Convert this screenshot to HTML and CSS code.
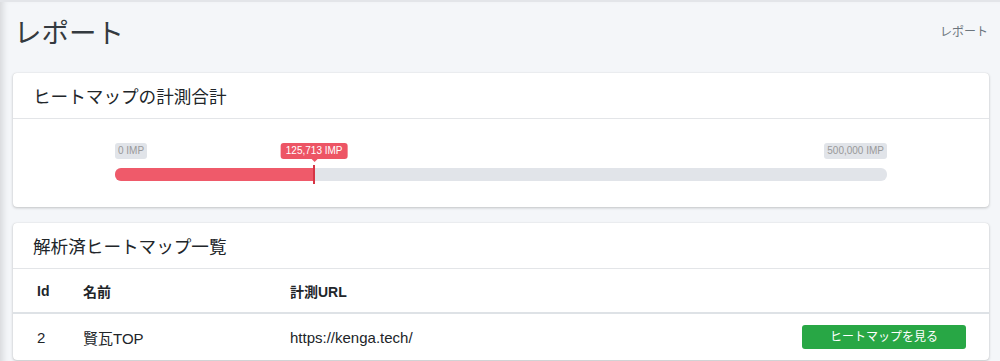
FILE: index.html
```html
<!DOCTYPE html>
<html lang="ja">
<head>
    <meta charset="UTF-8">
    <title>レポート</title>
    <link rel="stylesheet" href="styles.css">
</head>
<body>
    <div class="wrapper">
        <div class="content-header">
            <h1>レポート</h1>
            <div class="breadcrumb">レポート</div>
        </div>

        <div class="card">
            <div class="card-header">
                <h3 class="card-title">ヒートマップの計測合計</h3>
            </div>
            <div class="card-body slider-body">
                <div class="slider">
                    <div class="slider-labels">
                        <span class="slider-label">0 IMP</span>
                        <span class="slider-label">500,000 IMP</span>
                        <span class="slider-current" style="left: 25.8%">125,713 IMP</span>
                    </div>
                    <div class="slider-track">
                        <div class="slider-fill" style="width: 25.8%"></div>
                        <div class="slider-handle" style="left: 25.8%"></div>
                    </div>
                </div>
            </div>
        </div>

        <div class="card">
            <div class="card-header">
                <h3 class="card-title">解析済ヒートマップ一覧</h3>
            </div>
            <table class="table">
                <thead>
                    <tr>
                        <th class="col-id">Id</th>
                        <th class="col-name">名前</th>
                        <th>計測URL</th>
                        <th></th>
                    </tr>
                </thead>
                <tbody>
                    <tr>
                        <td>2</td>
                        <td>賢瓦TOP</td>
                        <td>https://kenga.tech/</td>
                        <td class="col-action"><a href="#" class="button">ヒートマップを見る</a></td>
                    </tr>
                </tbody>
            </table>
        </div>
    </div>
</body>
</html>
```

FILE: styles.css
```css
body {
    margin: 0;
    padding: 0;
    font-family: "Liberation Sans", "Noto Sans CJK JP", sans-serif;
    color: #212529;
    background-color: #f4f6f9;
}
.wrapper {
    min-height: 361px;
    padding: 0 11px 0 13px;
    border-top: 2px solid #e3e5e9;
    box-shadow: inset 7px 0 6px -4px rgba(0,0,0,0.12);
}
.content-header {
    display: flex;
    justify-content: space-between;
    align-items: flex-start;
    padding: 14px 0 21px 1px;
}
.content-header h1 {
    margin: 0;
    font-size: 27.5px;
    font-weight: 400;
    line-height: 36px;
    color: #343a40;
}
.breadcrumb {
    font-size: 12px;
    line-height: 16px;
    margin-top: 8px;
    color: #6c757d;
    padding-right: 1px;
}
.card {
    background-color: white;
    border-radius: 4px;
    box-shadow: 0 0 1px rgba(0,0,0,0.15), 0 1px 3px rgba(0,0,0,0.2);
    margin-bottom: 16px;
}
.card-header {
    padding: 0 20px;
    height: 45px;
    display: flex;
    align-items: center;
    border-bottom: 1px solid #e3e5e8;
}
.card-title {
    margin: 0;
    font-size: 17.6px;
    font-weight: 400;
    color: #212529;
}
.slider-body {
    padding: 24px 102px 26px;
}
.slider-labels {
    position: relative;
    display: flex;
    justify-content: space-between;
    height: 16px;
}
.slider-label {
    background-color: #e1e4e9;
    color: #999;
    font-size: 10px;
    line-height: 16px;
    padding: 0 3px;
    border-radius: 3px;
}
.slider-current {
    position: absolute;
    top: 0;
    transform: translateX(-50%);
    background-color: #ed5565;
    color: white;
    font-size: 10px;
    line-height: 16px;
    padding: 0 5px;
    border-radius: 3px;
    white-space: nowrap;
}
.slider-current::after {
    content: "";
    position: absolute;
    left: 50%;
    bottom: -3px;
    margin-left: -3px;
    border-left: 3px solid transparent;
    border-right: 3px solid transparent;
    border-top: 3px solid #ed5565;
}
.slider-track {
    position: relative;
    margin-top: 9px;
    height: 13px;
    border-radius: 6px;
    background-color: #e1e4e9;
}
.slider-fill {
    height: 100%;
    border-radius: 6px 0 0 6px;
    background-color: #ef5a6a;
}
.slider-handle {
    position: absolute;
    top: -3px;
    width: 2px;
    height: 19px;
    margin-left: -1px;
    background-color: #d63545;
}
.table {
    width: 100%;
    border-collapse: collapse;
    font-size: 14px;
}
.table th {
    text-align: left;
    font-weight: 700;
    height: 43px;
    padding: 0 12px;
    border-bottom: 2px solid #dee2e6;
    color: #212529;
}
.table td {
    height: 46px;
    padding: 0 12px;
    font-size: 15px;
    color: #212529;
}
.table th:first-child,
.table td:first-child {
    padding-left: 24px;
}
.col-id {
    width: 22px;
}
.col-name {
    width: 183px;
}
.col-action {
    text-align: right;
    padding-right: 23px !important;
}
.button {
    display: inline-block;
    width: 164px;
    text-align: center;
    background-color: #28a745;
    color: white;
    font-size: 12px;
    line-height: 24px;
    border-radius: 3px;
    text-decoration: none;
}
```
